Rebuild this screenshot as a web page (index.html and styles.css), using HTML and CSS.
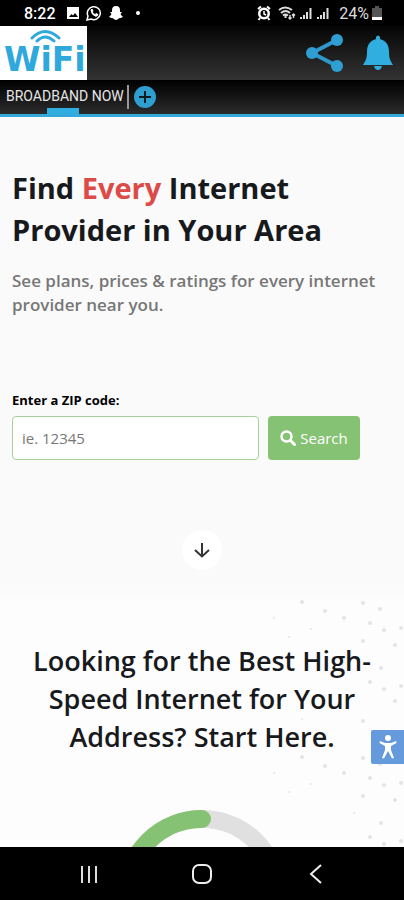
FILE: index.html
```html
<!DOCTYPE html>
<html lang="en">
<head>
    <meta charset="UTF-8">
    <meta name="viewport" content="width=device-width, initial-scale=1.0">
    <title>Broadband Now</title>
    <link rel="stylesheet" href="styles.css">
</head>
<body>
    <div class="status-bar">
        <span class="clock">8:22</span>
        <svg width="14" height="14" viewBox="0 0 14 14"><path fill="#fff" fill-rule="evenodd" d="M1 1h12v12H1zM3 11h9L9 7 7 9.500 5.500 8z"/></svg>
        <svg width="16" height="16" viewBox="0 0 16 16" fill="none" stroke="#fff"><path stroke-width="1.500" d="M1 15l1-4a6.500 6.500 0 1 1 3 3z"/><path fill="#fff" d="M5 5l1-1 1 2-.7 1q1 2 2.700 2.500l1-1 2 1q-.5 2-2.500 1.700Q5.500 10 5 5z"/></svg>
        <svg width="16" height="16" viewBox="0 0 16 16"><path fill="#fff" d="M8 1c3 0 4 2 4 4v2l2 0-1.500 2q1 2 2.500 2.500l-2 1.500-2 .3Q9.500 15 8 15t-3-1.700L3 13l-2-1.500Q2.500 11 3.500 9L2 7h2V5c0-2 1-4 4-4z"/></svg>
        <span class="dot"></span>
        <span class="spacer"></span>
        <svg width="16" height="16" viewBox="0 0 16 16"><circle cx="8" cy="8.500" r="6" fill="#fff"/><path d="M2 4l3-2.500M14 4l-3-2.500M4 13l-1.500 2M12 13l1.500 2" stroke="#fff" stroke-width="2"/><circle cx="8" cy="8.500" r="3.500" fill="#000"/><path d="M8 6v3l2 1" fill="none" stroke="#fff" stroke-width="1.500"/></svg>
        <svg class="wifi-status" width="18" height="16" viewBox="0 0 18 16" fill="none" stroke="#ddd" stroke-width="2"><path d="M1 5q6-5 13 0M3 8q4.500-4 9 0M5 10.500q2.500-2 5 0M7.500 10v3"/><path stroke-width="1.500" d="M12 10v4M10.500 12.500l1.500 1.500 1.500-1.500M15.500 13V9M14 10.500L15.500 9l1.500 1.500"/></svg>
        <svg width="14" height="14" viewBox="0 0 14 14" stroke="#ddd" stroke-width="2"><path d="M2 13v-2M5 13V9M8 13V6M11.500 13V2"/></svg>
        <svg width="14" height="14" viewBox="0 0 14 14" stroke="#ddd" stroke-width="2"><path d="M2 13v-2M5 13V9M8 13V6M11.500 13V2"/></svg>
        <span class="battery">24%</span>
        <svg width="10" height="14" viewBox="0 0 10 14"><path fill="#555" d="M3 0h4v2h3v9H0V2h3z"/><path fill="#fff" d="M0 11h10v3H0z"/></svg>
    </div>

    <header class="app-bar">
        <a class="logo" href="#" aria-label="WiFi home">
            <svg width="87" height="54" viewBox="0 0 87 54">
                <text class="logo-text" x="4" y="45">WiFi</text>
                <path fill="none" stroke="#2fa8dc" stroke-width="3" stroke-linecap="round" d="M32 12q13-13 27 0M37 15q8-8 17 0"/>
            </svg>
        </a>
        <button class="icon-btn" aria-label="Share">
            <svg width="40" height="42" viewBox="0 0 40 42"><path d="M33 8L8 21l25 13" fill="none" stroke="#2f97c9" stroke-width="4"/><g fill="#2f9fd3"><circle cx="33" cy="8" r="6"/><circle cx="8" cy="21" r="6"/><circle cx="33" cy="34" r="6"/></g></svg>
        </button>
        <button class="icon-btn" aria-label="Notifications">
            <svg width="32" height="36" viewBox="0 0 32 36"><path fill="#30aee0" d="M14 4V2q2-3 4 0v2c7 2 9 7 9 13 0 6 1 8 4 13H1c3-5 4-7 4-13C5 11 7 6 14 4zM12 31h8q-1 4-4 4t-4-4z"/></svg>
        </button>
    </header>

    <nav class="tabs">
        <a class="tab" href="#">BROADBAND NOW</a>
        <span class="divider"></span>
        <button class="add-btn" aria-label="Add tab">
            <svg width="24" height="24" viewBox="0 0 24 24"><circle cx="12" cy="12" r="11" fill="#2f9fd0"/><path d="M12 6v12M6 12h12" stroke="#0c1a22" stroke-width="2"/></svg>
        </button>
    </nav>

    <main>
        <section class="hero">
            <h1>Find <em>Every</em> Internet Provider in Your Area</h1>
            <p>See plans, prices &amp; ratings for every internet provider near you.</p>
            <form>
                <label for="zip">Enter a ZIP code:</label>
                <div class="search-row">
                    <input type="text" id="zip" name="zip" placeholder="ie. 12345">
                    <button type="submit">
                        <svg width="16" height="16" viewBox="0 0 16 16" fill="none" stroke="#fff"><circle cx="6.500" cy="6.500" r="5" stroke-width="2.500"/><path d="M10.500 10.500l4 4" stroke-width="3" stroke-linecap="round"/></svg>
                        Search
                    </button>
                </div>
            </form>
            <a class="scroll-down" href="#start" aria-label="Scroll down">
                <svg width="18" height="18" viewBox="0 0 18 18" fill="none" stroke="#333" stroke-width="2"><path d="M9 2v13M2 9l7 6.500L16 9"/></svg>
            </a>
        </section>

        <section class="start" id="start">
            <svg class="dots" width="170" height="260" viewBox="0 0 170 260" fill="#e3e4e6">
                <g id="dot-group">
                    <circle cx="68" cy="14" r="2"/><circle cx="91" cy="23" r="2"/><circle cx="129" cy="15" r="2"/><circle cx="146" cy="21" r="2"/><circle cx="110" cy="30" r="2"/><circle cx="136" cy="35" r="2"/><circle cx="150" cy="42" r="2"/><circle cx="167" cy="40" r="2"/><circle cx="77" cy="41" r="1"/><circle cx="129" cy="53" r="2"/><circle cx="161" cy="57" r="2"/><circle cx="40" cy="30" r="1"/><circle cx="55" cy="49" r="1"/>
                    <circle cx="147" cy="80" r="2"/><circle cx="136" cy="94" r="2"/><circle cx="150" cy="101" r="2"/><circle cx="167" cy="98" r="2"/><circle cx="120" cy="70" r="1"/><circle cx="161" cy="113" r="2"/><circle cx="68" cy="131" r="1"/><circle cx="129" cy="133" r="2"/>
                </g>
                <use href="#dot-group" y="155"/>
            </svg>
            <h2>Looking for the Best High-Speed Internet for Your Address? Start Here.</h2>
            <svg class="ring" width="170" height="170" viewBox="0 0 170 170" fill="none" stroke-width="18">
                <circle cx="85" cy="85" r="76" stroke="#e0e0e0"/>
                <path d="M9 85A76 76 0 0 1 85 9" stroke="#86c274" stroke-linecap="round"/>
            </svg>
            <button class="accessibility" aria-label="Accessibility options">
                <svg width="18" height="24" viewBox="0 0 18 24" fill="#fff"><circle cx="9" cy="3" r="3"/><path d="M1 6l5 2h6l5-2 .5 2L12 11v4l3 8-2 .5L9 16l-4 7.500L3 23l3-8v-4L.5 8z"/></svg>
            </button>
        </section>
    </main>

    <footer class="nav-bar">
        <button aria-label="Recent apps"><svg width="24" height="24" viewBox="0 0 24 24" stroke="#ddd" stroke-width="2"><path d="M5 4v17M12 4v17M19 4v17"/></svg></button>
        <button aria-label="Home"><svg width="24" height="24" viewBox="0 0 24 24" fill="none" stroke="#eee" stroke-width="2"><rect x="3" y="3" width="18" height="18" rx="6"/></svg></button>
        <button aria-label="Back"><svg width="24" height="24" viewBox="0 0 24 24" fill="none" stroke="#eee" stroke-width="2"><path d="M18 3L8 12l10 9"/></svg></button>
    </footer>
</body>
</html>
```
FILE: styles.css
```css
* {
    margin: 0;
    padding: 0;
    box-sizing: border-box;
}

body {
    font-family: 'Open Sans', sans-serif;
    background: #fafafa;
    color: #17191c;
    height: 100vh;
    display: flex;
    flex-direction: column;
}

svg {
    display: block;
    flex: none;
}

button {
    border: none;
    background: none;
    cursor: pointer;
}

/* Phone status bar */
.status-bar {
    display: flex;
    align-items: center;
    gap: 6px;
    height: 26px;
    flex: none;
    padding: 0 22px 0 24px;
    background: #000;
    color: #fff;
    font: 500 16px Roboto, sans-serif;
}

.clock {
    margin-right: 4px;
}

.dot {
    width: 4px;
    height: 4px;
    margin-left: 6px;
    border-radius: 50%;
    background: #fff;
}

.spacer {
    flex: 1;
}

.status-bar .wifi-status ~ svg {
    margin-left: -3px;
}

.battery {
    margin-left: 3px;
    font-weight: 400;
    color: #ddd;
}

/* App header */
.app-bar {
    display: flex;
    align-items: center;
    gap: 18px;
    height: 54px;
    flex: none;
    padding-right: 10px;
    background: linear-gradient(#050505, #333);
}

.logo {
    background: #fff;
    margin-right: auto;
}

.logo-text {
    font: bold 33px 'DejaVu Sans', sans-serif;
    fill: #2fa8dc;
}

.tabs {
    display: flex;
    align-items: stretch;
    height: 37px;
    flex: none;
    padding-left: 6px;
    background: linear-gradient(#000, #2c2c2c);
    border-bottom: 3px solid #35a9dc;
}

.tab {
    position: relative;
    color: #e6e6e6;
    font: 14px/32px Roboto, sans-serif;
    text-decoration: none;
}

.tab::after {
    content: '';
    position: absolute;
    left: 50%;
    bottom: 0;
    width: 32px;
    height: 6px;
    margin-left: -18px;
    background: #30aee0;
}

.divider {
    width: 2px;
    margin: 5px 4px 5px 3px;
    background: #999;
}

.add-btn {
    align-self: center;
}

/* Page content */
main {
    flex: 1;
    min-height: 0;
    overflow: hidden;
}

.hero {
    padding: 50px 12px 18px;
}

h1 {
    font-size: 29px;
    line-height: 42px;
    font-weight: 700;
}

h1 em {
    color: #dc4b47;
    font-style: normal;
}

.hero p {
    margin-top: 18px;
    color: #777;
    font-size: 17px;
    line-height: 24px;
    font-weight: 600;
}

form {
    margin-top: 72px;
}

label {
    display: block;
    margin-bottom: 5px;
    color: #000;
    font-size: 13px;
    line-height: 22px;
    font-weight: 700;
}

.search-row {
    display: flex;
    gap: 9px;
    padding-right: 32px;
}

.search-row input {
    flex: 1;
    min-width: 0;
    height: 44px;
    padding: 0 9px;
    border: 1px solid #a5d399;
    border-radius: 4px;
    background: #fff;
    font: 15px 'Open Sans', sans-serif;
}

.search-row input::placeholder {
    color: #777;
}

.search-row button {
    display: flex;
    align-items: center;
    justify-content: center;
    gap: 4px;
    width: 92px;
    height: 44px;
    border-radius: 4px;
    background: #86c274;
    color: #fff;
    font: 15px 'Open Sans', sans-serif;
}

.scroll-down {
    display: flex;
    align-items: center;
    justify-content: center;
    width: 40px;
    height: 40px;
    margin: 70px auto 0;
    border-radius: 50%;
    background: #fff;
}

.start {
    position: relative;
    padding: 54px 24px 0;
    background: linear-gradient(#fafafa, #fdfdfd 16px);
}

.dots {
    position: absolute;
    top: 0;
    right: 0;
}

h2 {
    position: relative;
    font-size: 27px;
    line-height: 38px;
    font-weight: 600;
    text-align: center;
}

.ring {
    margin: 54px auto 0;
}

.accessibility {
    position: absolute;
    top: 142px;
    right: 0;
    width: 33px;
    height: 34px;
    padding-left: 8px;
    border-radius: 2px 0 0 2px;
    background: #659bdc;
}

/* Phone navigation */
.nav-bar {
    display: flex;
    align-items: center;
    justify-content: center;
    gap: 89px;
    height: 53px;
    flex: none;
    background: #000;
}
```
